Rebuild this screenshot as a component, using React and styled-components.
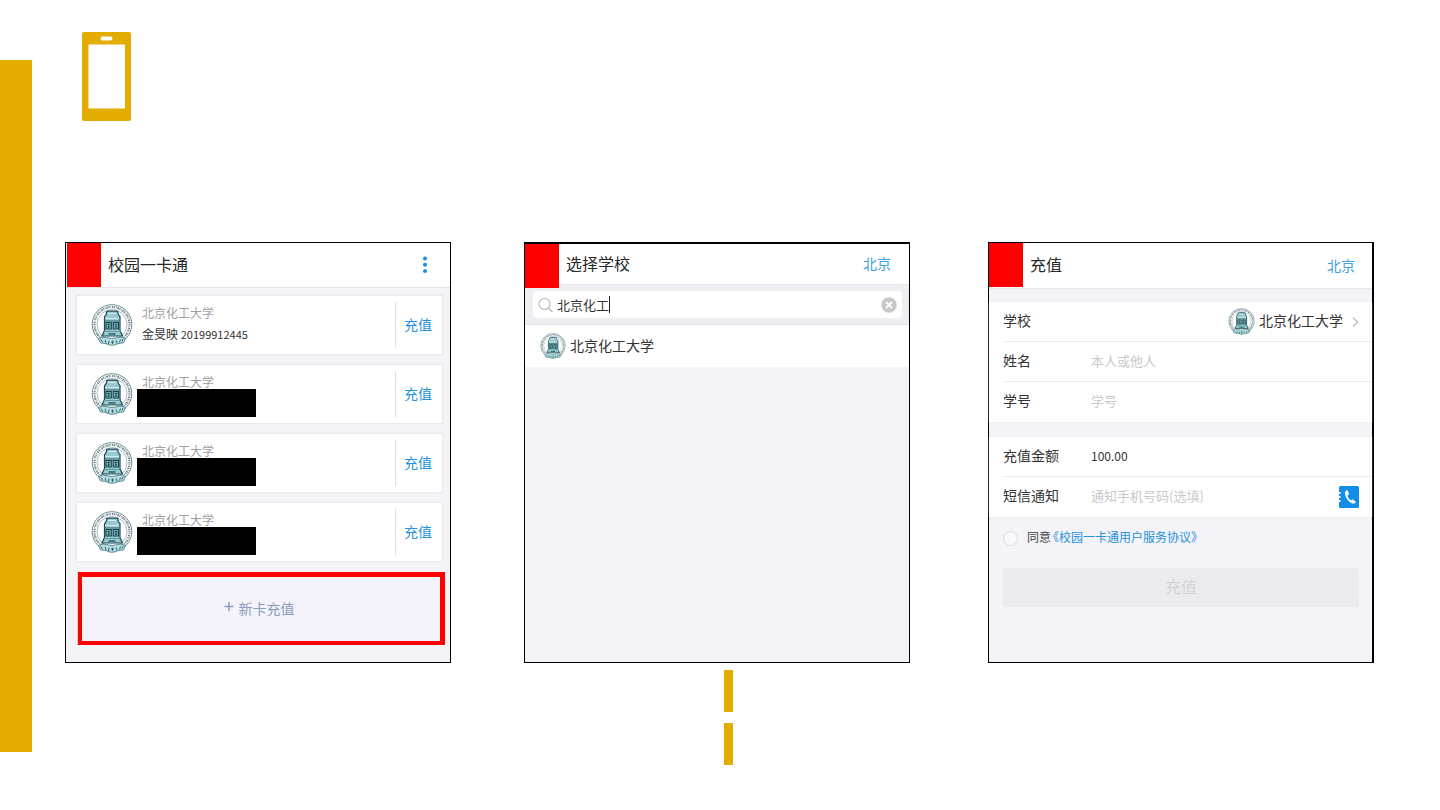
import React from 'react';
import styled, { createGlobalStyle } from 'styled-components';

const GlobalStyle = createGlobalStyle`
  *, *::before, *::after { box-sizing: border-box; }
  body {
    margin: 0;
    background: #fff;
    color: #333;
    font-family: "Noto Sans CJK SC", "Noto Sans", sans-serif;
    font-size: 14px;
  }
  button, input { font-family: inherit; padding: 0; margin: 0; border: 0; background: none; }
  button { cursor: pointer; }
  a { text-decoration: none; }
  svg { display: block; flex: none; }
  h2 { margin: 0; }
`;

const gold = '#e2ac00';
const blue = '#2491dc';

const Page = styled.div`
  display: flex;
  min-height: 100vh;
`;
const SideBar = styled.aside`
  flex: none;
  width: 32px;
  margin: 60px 0 58px;
  background: ${gold};
`;
const Main = styled.main`
  flex: 1;
  min-width: 0;
  padding: 32px 66px 45px 33px;
`;
const Brand = styled.header`
  height: 210px;
  padding-left: 17px;
`;
const Screens = styled.div`
  display: grid;
  grid-template-columns: 1fr 73px 1fr 78px 1fr;
  min-height: 421px;
`;
const Screen = styled.section`
  grid-column: ${(p) => p.$column};
  border: 1px solid #000;
  border-top-width: ${(p) => p.$top || 1}px;
  border-right-width: ${(p) => p.$right || 1}px;
  background: #f3f3f8;
  min-width: 0;
`;
const TitleBar = styled.div`
  display: flex;
  align-items: center;
  height: ${(p) => p.$height}px;
  padding: 0 ${(p) => p.$right}px 0 ${(p) => p.$left || 0}px;
  background: #fff;
  border-bottom: 1px solid #e6e6ea;
`;
const RedBlock = styled.div`
  align-self: flex-start;
  flex: none;
  position: relative;
  width: 34px;
  height: 44px;
  background: #f00;
`;
const Title = styled.h2`
  flex: 1;
  padding: 0 0 3px 7px;
  font-size: 16px;
  font-weight: 400;
  line-height: 24px;
  color: #262626;
`;
const CityLink = styled.a`
  padding-bottom: 2px;
  font-size: 14px;
  line-height: 20px;
  color: #3c9fe2;
`;
const MenuButton = styled.button`
  width: 10px;
  height: 20px;
`;

const CardList = styled.ul`
  display: flex;
  flex-direction: column;
  gap: 9px;
  margin: 0;
  padding: 7px 7px 0 10px;
  list-style: none;
`;
const Card = styled.li`
  display: flex;
  align-items: center;
  height: 60px;
  padding-left: 14px;
  background: #fff;
  border: 1px solid #e9e9ec;
  box-shadow: 0 0 1px #e4e4e8;
`;
const CardInfo = styled.div`
  flex: 1;
  align-self: stretch;
  padding: 10px 0 0 4px;
`;
const SchoolName = styled.div`
  padding-left: 5px;
  font-size: 12px;
  line-height: 14px;
  color: #a0a0a0;
`;
const Holder = styled.div`
  padding-left: 5px;
  font-size: 12px;
  line-height: 28px;
  color: #333;
`;
const HolderNumber = styled.span`
  font-size: 11px;
`;
const Redaction = styled.div`
  width: 119px;
  height: 28px;
  background: #000;
`;
const TopUpButton = styled.button`
  width: 47px;
  height: 46px;
  padding: 0 2px 2px 0;
  border-left: 1px solid #e0e0e3;
  font-size: 14px;
  color: ${blue};
`;
const NewCardWrap = styled.div`
  margin: 10px 5px 0 11px;
  border-left: 1px dotted #b9b9bd;
`;
const NewCardButton = styled.button`
  display: flex;
  align-items: center;
  justify-content: center;
  gap: 5px;
  width: 100%;
  height: 73px;
  padding: 0 4px 3px 0;
  border: 5px solid #f00;
  border-left-width: 4px;
  border-bottom-width: 4px;
  background: #f4f3f9;
  font-size: 14px;
  color: #8a9ac0;
`;

const SearchStrip = styled.div`
  padding: 6px 7px 6px 8px;
  background: #eeeef3;
  border-bottom: 1px solid #dfdfe5;
`;
const SearchBox = styled.label`
  display: flex;
  align-items: center;
  height: 27px;
  padding: 0 5px;
  border-radius: 4px;
  background: #fff;
`;
const SearchInput = styled.input`
  field-sizing: content;
  margin-left: 4px;
  font-size: 13px;
  line-height: 20px;
  color: #333;
  outline: none;
`;
const Caret = styled.span`
  width: 1px;
  height: 17px;
  background: #222;
`;
const ClearButton = styled.button`
  margin-left: auto;
`;
const ResultRow = styled.button`
  display: flex;
  align-items: center;
  gap: 4px;
  width: 100%;
  height: 42px;
  padding-left: 15px;
  background: #fff;
  font-size: 14px;
  color: #333;
`;
const ResultName = styled.span`
  padding-bottom: 3px;
`;

const Fields = styled.div`
  margin-top: ${(p) => p.$gap}px;
  background: #fff;
  box-shadow: 0 0 1px #dcdce0;
`;
const Field = styled.label`
  display: flex;
  align-items: center;
  height: 40px;
  margin-left: 14px;
  padding-right: 13px;
  border-bottom: 1px solid #ececef;
  &:last-child { border-bottom-color: transparent; }
`;
const FieldLabel = styled.span`
  flex: none;
  width: 88px;
  padding-bottom: 3px;
  color: #333;
`;
const FieldInput = styled.input`
  flex: 1;
  min-width: 0;
  height: 24px;
  padding-bottom: 3px;
  font-size: ${(p) => p.$size || 13}px;
  color: #333;
  outline: none;
  &::placeholder { color: #c9c9cb; opacity: 1; }
`;
const SchoolPicker = styled.button`
  display: flex;
  align-items: center;
  gap: 4px;
  margin-left: auto;
  font-size: 14px;
  line-height: 20px;
  color: #333;
`;
const Chevron = styled.svg`
  margin-left: 5px;
`;
const Agreement = styled.label`
  display: flex;
  align-items: center;
  height: 20px;
  margin: 11px 14px 0;
  font-size: 12px;
  line-height: 18px;
  color: #444;
`;
const AgreeBox = styled.input`
  appearance: none;
  width: 15px;
  height: 15px;
  margin-right: 9px;
  border: 1px solid #d9d9dd;
  border-radius: 50%;
  background: #f8f8fb;
`;
const AgreementText = styled.span`
  padding-bottom: 2px;
`;
const AgreementLink = styled.a`
  margin-left: 2px;
  color: ${blue};
  font-feature-settings: "halt";
`;
const SubmitButton = styled.button`
  display: block;
  width: calc(100% - 27px);
  height: 39px;
  margin: 20px 13px 0 14px;
  padding-bottom: 4px;
  border-radius: 4px;
  background: #ebebef;
  font-size: 16px;
  color: #d2d2d6;
`;
const Dashes = styled.div`
  display: flex;
  flex-direction: column;
  align-items: center;
  gap: 11px;
  padding: 7px 0 0 18px;
`;
const Dash = styled.div`
  width: 9px;
  height: 42px;
  background: ${gold};
`;

function Crest({ size }) {
  return (
    <svg width={size} height={size} viewBox="0 0 42 42" fill="none" aria-hidden="true">
      <circle cx="21" cy="20.500" r="19.800" stroke="#5d7f86" strokeWidth=".9" />
      <circle cx="21" cy="20.500" r="17.500" stroke="#71868b" strokeWidth="2.200" strokeDasharray="1.100 .8 .6 .9 1.500 .7" />
      <circle cx="21" cy="20.500" r="15" stroke="#7fa0a5" strokeWidth=".7" />
      <path d="M15.500 9q0-1.800 2-1.800h7.500q2 0 2 1.800 0 2 2 3.500v14l2.500 5.500H11l2.500-5.500v-14q2-1.500 2-3.500Z" fill="#97c9ce" stroke="#1d4a55" strokeWidth="1.200" />
      <path d="M17 9.500h8M14.500 14.500h13" stroke="#d5eaec" strokeWidth="1.200" />
      <path d="M14 17h14.500" stroke="#1d4a55" strokeWidth=".8" />
      <path d="M15 18.500h5.300v6.500H15ZM22.200 18.500h5.300v6.500h-5.300Z" fill="#7fb5bc" stroke="#17434e" strokeWidth="1.100" />
      <path d="M16.500 20.500h2.500M17.700 19.500v5M16.500 23h2.500M23.700 20.500h2.500M24.900 19.500v5M23.700 23h2.500" stroke="#17434e" strokeWidth=".8" />
      <path d="M13 27.500h16.500" stroke="#5b959d" strokeWidth=".9" />
      <path d="M17.500 30h7" stroke="#17434e" strokeWidth="1.200" />
      <path d="M7.500 34.500 12 33q9 3 18 0l4.500 1.500-2 4.500-5 .3q-6.500 4-13 0l-5-.3Z" fill="#b9dde0" stroke="#3d7580" strokeWidth=".8" />
      <path d="m10 35.500 1.500 2.500M14 35.800l1 3M18 36.500l-.5 3.500M20 38h3M21.500 36.500v3.500M25 36.300l1 3M29.500 35.500l-1 3M32 35 31 37.500" stroke="#285f6a" strokeWidth=".9" />
    </svg>
  );
}

const cards = [{ holder: '金旻映', number: '20199912445' }, {}, {}, {}];

function CardScreen() {
  return (
    <Screen $column={1}>
      <TitleBar $height={45} $right={20} $left={1}>
        <RedBlock />
        <Title>校园一卡通</Title>
        <MenuButton aria-label="更多">
          <svg width="10" height="20" viewBox="0 0 10 20" fill="#1b8de2">
            <circle cx="5" cy="3.500" r="2" />
            <circle cx="5" cy="9.700" r="2" />
            <circle cx="5" cy="16" r="2" />
          </svg>
        </MenuButton>
      </TitleBar>
      <CardList>
        {cards.map((card, i) => (
          <Card key={i}>
            <Crest size={42} />
            <CardInfo>
              <SchoolName>北京化工大学</SchoolName>
              {card.holder ? (
                <Holder>{card.holder} <HolderNumber>{card.number}</HolderNumber></Holder>
              ) : (
                <Redaction />
              )}
            </CardInfo>
            <TopUpButton>充值</TopUpButton>
          </Card>
        ))}
      </CardList>
      <NewCardWrap>
        <NewCardButton>
          <svg width="10" height="14" viewBox="0 0 10 14" stroke="#8a9ac0" strokeWidth="1.500">
            <path d="M5 1v9M.5 5.500h9" />
          </svg>
          新卡充值
        </NewCardButton>
      </NewCardWrap>
    </Screen>
  );
}

function SearchScreen() {
  return (
    <Screen $column={3} $top={2}>
      <TitleBar $height={41} $right={18}>
        <RedBlock />
        <Title>选择学校</Title>
        <CityLink href="#city">北京</CityLink>
      </TitleBar>
      <SearchStrip>
        <SearchBox>
          <svg width="15" height="16" viewBox="0 0 15 16" fill="none" stroke="#b4b4b8" strokeWidth="1.100">
            <circle cx="6.500" cy="7" r="5.500" />
            <path d="m10.500 11 4 4" />
          </svg>
          <SearchInput defaultValue="北京化工" aria-label="搜索学校" />
          <Caret />
          <ClearButton aria-label="清除">
            <svg width="16" height="16" viewBox="0 0 16 16">
              <circle cx="8" cy="8" r="7.700" fill="#c8c8c8" />
              <path d="m5 5 6 6M11 5l-6 6" stroke="#fff" strokeWidth="1.800" />
            </svg>
          </ClearButton>
        </SearchBox>
      </SearchStrip>
      <ResultRow>
        <Crest size={26} />
        <ResultName>北京化工大学</ResultName>
      </ResultRow>
    </Screen>
  );
}

function TopUpScreen() {
  return (
    <Screen $column={5} $right={2}>
      <TitleBar $height={46} $right={17}>
        <RedBlock />
        <Title>充值</Title>
        <CityLink href="#city">北京</CityLink>
      </TitleBar>
      <Fields $gap={13}>
        <Field as="div">
          <FieldLabel>学校</FieldLabel>
          <SchoolPicker>
            <Crest size={27} />
            <ResultName>北京化工大学</ResultName>
            <Chevron width="7" height="12" viewBox="0 0 7 12" fill="none" stroke="#c0c0c4" strokeWidth="1.500">
              <path d="m1 1.500 4.500 4.500L1 10.500" />
            </Chevron>
          </SchoolPicker>
        </Field>
        <Field>
          <FieldLabel>姓名</FieldLabel>
          <FieldInput placeholder="本人或他人" />
        </Field>
        <Field>
          <FieldLabel>学号</FieldLabel>
          <FieldInput placeholder="学号" />
        </Field>
      </Fields>
      <Fields $gap={15}>
        <Field>
          <FieldLabel>充值金额</FieldLabel>
          <FieldInput $size={12} defaultValue="100.00" />
        </Field>
        <Field>
          <FieldLabel>短信通知</FieldLabel>
          <FieldInput placeholder="通知手机号码(选填)" />
          <svg width="20" height="22" viewBox="0 0 20 22">
            <rect width="20" height="22" rx="1.500" fill="#108ee9" />
            <path d="M0 7h1.500M0 11h1.500M0 15h1.500" stroke="#fff" strokeWidth="1.800" />
            <path d="M7.700 4.300c-1.500.7-2 2.100-1.700 4 .7 4 3.300 7.300 6.800 8.900 1.500.7 3 .4 3.700-.8.3-.5.100-.9-.3-1.200l-2-1.500c-.5-.4-1-.3-1.400.1l-.7.8c-1.900-1.200-3.100-2.900-3.800-5.100l1-.6c.5-.3.600-.7.500-1.200l-.8-2.700c-.2-.6-.7-.9-1.300-.7Z" fill="#fff" />
          </svg>
        </Field>
      </Fields>
      <Agreement>
        <AgreeBox type="checkbox" />
        <AgreementText>
          同意<AgreementLink href="#agreement">《校园一卡通用户服务协议》</AgreementLink>
        </AgreementText>
      </Agreement>
      <SubmitButton>充值</SubmitButton>
    </Screen>
  );
}

export default function App() {
  return (
    <Page>
      <GlobalStyle />
      <SideBar />
      <Main>
        <Brand>
          <svg width="49" height="89" viewBox="0 0 49 89" aria-hidden="true">
            <path fill={gold} fillRule="evenodd" d="M2 0h45a2 2 0 0 1 2 2v85a2 2 0 0 1-2 2H2a2 2 0 0 1-2-2V2a2 2 0 0 1 2-2ZM6.500 12.500v64H43v-64ZM20.500 4.500a2 2 0 0 0 0 4h8a2 2 0 0 0 0-4Z" />
          </svg>
        </Brand>
        <Screens>
          <CardScreen />
          <SearchScreen />
          <TopUpScreen />
        </Screens>
        <Dashes>
          <Dash />
          <Dash />
        </Dashes>
      </Main>
    </Page>
  );
}
